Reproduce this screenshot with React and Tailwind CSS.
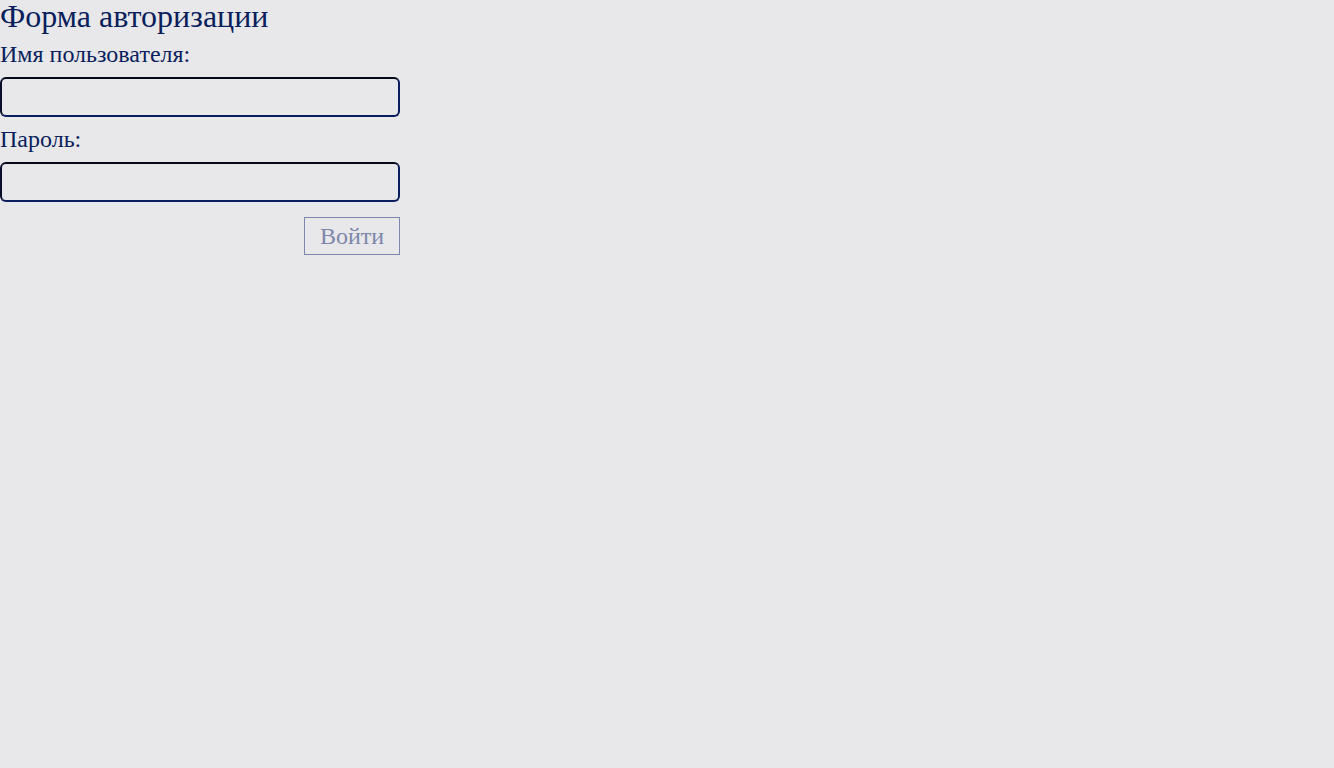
import React, { useState } from "react";

function LoginForm() {
  const [username, setUsername] = useState("");
  const [password, setPassword] = useState("");

  return (
    <form
      className="w-[400px] flex flex-col text-[#0a1f5c]"
      style={{ fontFamily: '"Liberation Serif", serif' }}
      onSubmit={(e) => e.preventDefault()}
    >
      <h1 className="text-[32px] leading-[32px] font-normal">Форма авторизации</h1>
      <label className="text-[24px] leading-[26px] mt-[9px]" htmlFor="username">
        Имя пользователя:
      </label>
      <input
        id="username"
        type="text"
        value={username}
        onChange={(e) => setUsername(e.target.value)}
        className="mt-[10px] h-[40px] w-full rounded-[6px] border-2 border-[#0b1d5e] border-t-[#05081a] border-l-[#070d2a] bg-transparent px-2 text-[20px] focus:outline-none"
      />
      <label className="text-[24px] leading-[26px] mt-[9px]" htmlFor="password">
        Пароль:
      </label>
      <input
        id="password"
        type="password"
        value={password}
        onChange={(e) => setPassword(e.target.value)}
        className="mt-[10px] h-[40px] w-full rounded-[6px] border-2 border-[#0b1d5e] border-t-[#05081a] border-l-[#070d2a] bg-transparent px-2 text-[20px] focus:outline-none"
      />
      <div className="flex justify-end mt-[15px]">
        <button
          type="submit"
          className="h-[38px] w-[96px] border border-[#7c87b2] text-[#7c87ab] text-[24px] leading-none"
        >
          Войти
        </button>
      </div>
    </form>
  );
}

export default function App() {
  return (
    <div className="min-h-screen bg-[#e8e8ea]">
      <LoginForm />
    </div>
  );
}
